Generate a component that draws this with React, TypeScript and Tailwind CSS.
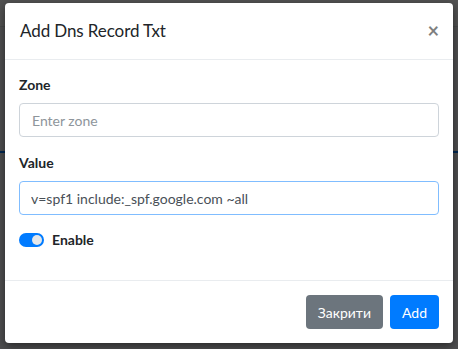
import { useState } from "react";

export default function App() {
  const [enabled, setEnabled] = useState(true);
  const font = { fontFamily: "Lato, 'Noto Sans', sans-serif" };

  return (
    <div className="relative w-[458px] h-[349px] overflow-hidden bg-[#f4f6f9]" style={font}>
      {/* page behind the backdrop */}
      <div className="flex flex-col h-full">
        <div className="h-[27px] bg-white border-b border-[#dee2e6]" />
        <div className="h-[124px]" />
        <div className="h-[2px] bg-[#007bff]" />
        <div className="flex-1" />
      </div>
      <div className="absolute inset-0 bg-black/68" />

      {/* modal */}
      <div className="absolute left-[5px] top-[3px] w-[448px] bg-white rounded-[4px] shadow-[0_3px_10px_rgba(0,0,0,0.5)] text-[14px] text-[#212529] leading-[1.5]">
        <div className="flex items-start justify-between px-[15px] pt-[15px] pb-[15px] border-b border-[#e9ecef]">
          <h5 className="text-[17px] leading-[26px] font-normal tracking-[-0.1px]">Add Dns Record Txt</h5>
          <button className="text-[20px] font-bold leading-none text-black opacity-50 mt-[2px] -mr-[1px]">×</button>
        </div>

        <div className="px-[14px] pt-[14px] pb-[15px]">
          <div className="mb-[15px]">
            <label className="block font-bold mb-[8px]">Zone</label>
            <input
              className="block w-full h-[34px] px-[12px] border border-[#ced4da] rounded-[4px] placeholder:text-[#8e959b] outline-none"
              placeholder="Enter zone"
            />
          </div>
          <div className="mb-[14px]">
            <label className="block font-bold mb-[8px]">Value</label>
            <input
              className="block w-full h-[34px] px-[11px] border border-[#80bdff] rounded-[4px] outline-none text-[#495057]"
              defaultValue="v=spf1 include:_spf.google.com ~all"
            />
          </div>
          <div className="flex items-center gap-[8px] h-[21px] mb-[15px]">
            <button
              onClick={() => setEnabled(!enabled)}
              className={`relative w-[25px] h-[14px] rounded-full ${enabled ? "bg-[#007bff]" : "bg-[#dee2e6]"}`}
            >
              <span
                className={`absolute top-[2px] w-[10px] h-[10px] rounded-full bg-[#e4e7ea] ${enabled ? "left-[13px]" : "left-[2px]"}`}
              />
            </button>
            <span className="font-bold">Enable</span>
          </div>
        </div>

        <div className="flex justify-end gap-[7px] p-[14px] border-t border-[#e9ecef]">
          <button className="h-[34px] px-[12px] rounded-[4px] bg-[#6c757d] text-white">Закрити</button>
          <button className="h-[34px] px-[12px] rounded-[4px] bg-[#007bff] text-white">Add</button>
        </div>
      </div>
    </div>
  );
}
